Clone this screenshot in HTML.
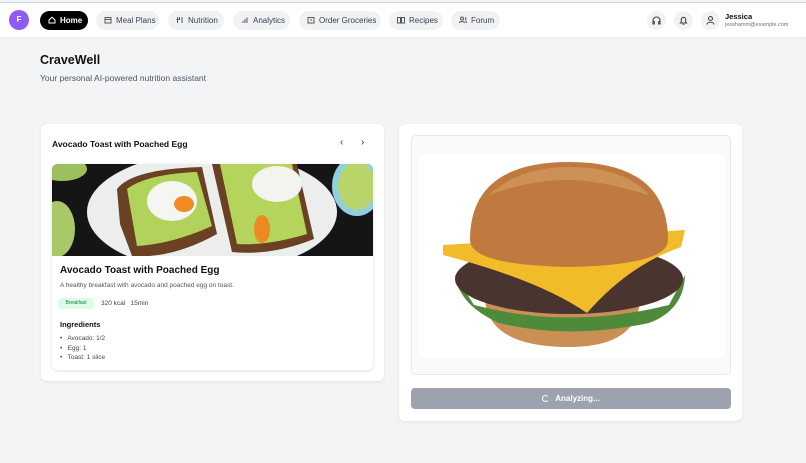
<!DOCTYPE html>
<html><head><meta charset="utf-8"><style>
*{box-sizing:border-box;margin:0;padding:0}
body{width:806px;height:463px;background:#f3f4f6;font-family:"Liberation Sans",sans-serif;position:relative;overflow:hidden;color:#111}
.abs{position:absolute}
.nav{left:0;top:2px;width:806px;height:35px;background:#fff;border-top:1px solid #d1d5db;box-shadow:0 1px 2px rgba(0,0,0,.06)}
.pill{position:absolute;top:8px;height:19px;border-radius:10px;background:#f1f2f4;font-size:8px;color:#374151;line-height:19px;padding-left:20px}
.pill svg{position:absolute;left:8px;top:5px}
.ib{position:absolute;top:8px;width:19px;height:19px;border-radius:50%;background:#f1f2f4}
.card{background:#fff;border-radius:6px;box-shadow:0 1px 3px rgba(0,0,0,.08)}
</style></head><body>
<div class="abs nav">
 <div class="abs" style="left:9px;top:7px;width:20px;height:20px;border-radius:50%;background:#8b5cf6;color:#fff;font-size:8px;font-weight:bold;text-align:center;line-height:20px">F</div>
 <div class="pill" style="left:40px;width:48px;background:#000;color:#fff;font-weight:bold"><svg width="8" height="8" viewBox="0 0 8 8" fill="none" stroke="#fff" stroke-width="1"><path d="M1 4L4 1.2 7 4V7H1Z"/></svg>Home</div>
 <div class="pill" style="left:96px;width:63px"><svg width="8" height="8" viewBox="0 0 8 8" fill="none" stroke="#555"><rect x="1" y="1.5" width="6" height="5.5"/><path d="M1 3.5H7"/></svg>Meal Plans</div>
 <div class="pill" style="left:168px;width:56px"><svg width="8" height="8" viewBox="0 0 8 8" fill="none" stroke="#555"><path d="M1.5 1V7M3.5 1V3.5H.5M6 1V7"/></svg>Nutrition</div>
 <div class="pill" style="left:233px;width:57px"><svg width="8" height="8" viewBox="0 0 8 8" fill="none" stroke="#555"><path d="M2 7V5M4 7V3M6 7V1.5"/></svg>Analytics</div>
 <div class="pill" style="left:299px;width:82px"><svg width="8" height="8" viewBox="0 0 8 8" fill="none" stroke="#555"><rect x="1" y="1.5" width="6" height="5.5"/><path d="M3 4H5"/></svg>Order Groceries</div>
 <div class="pill" style="left:389px;width:54px"><svg width="8" height="8" viewBox="0 0 8 8" fill="none" stroke="#555"><path d="M.5 1.5H3.5V7H.5ZM4.5 1.5H7.5V7H4.5Z"/></svg>Recipes</div>
 <div class="pill" style="left:451px;width:49px"><svg width="8" height="8" viewBox="0 0 8 8" fill="none" stroke="#555"><circle cx="3" cy="2.5" r="1.5"/><path d="M.5 7C.5 5 5.5 5 5.5 7M6 1.5A1.3 1.3 0 0 1 6 4M7.5 7C7.5 6 7 5.2 6.5 5"/></svg>Forum</div>
 <div class="ib" style="left:647px"><svg width="19" height="19" viewBox="0 0 19 19" fill="none" stroke="#444" stroke-width="1.1"><path d="M6 12V9.5A3.5 3.5 0 0 1 13 9.5V12M6 10.5H7.3V13H6ZM11.7 10.5H13V13H11.7Z"/></svg></div>
 <div class="ib" style="left:674px"><svg width="19" height="19" viewBox="0 0 19 19" fill="none" stroke="#444" stroke-width="1.1"><path d="M6.5 12H12.5L11.7 11V8.5A2.2 2.2 0 0 0 7.3 8.5V11ZM8.7 13.3H10.3"/></svg></div>
 <div class="ib" style="left:701px"><svg width="19" height="19" viewBox="0 0 19 19" fill="none" stroke="#444" stroke-width="1.1"><circle cx="9.5" cy="7.5" r="2"/><path d="M6 13.5C6 10.5 13 10.5 13 13.5"/></svg></div>
 <div class="abs" style="left:725px;top:9px;font-size:7.5px;font-weight:bold">Jessica</div>
 <div class="abs" style="left:725px;top:19px;font-size:5.5px;color:#6b7280">jesshamm@example.com</div>
</div>
<div class="abs" style="left:40px;top:53px;font-size:12.5px;font-weight:bold">CraveWell</div>
<div class="abs" style="left:40px;top:73px;font-size:8.5px;color:#4b5563">Your personal AI-powered nutrition assistant</div>

<div class="abs card" style="left:41px;top:124px;width:343px;height:257px">
 <div class="abs" style="left:11px;top:15px;font-size:8.5px;font-weight:bold">Avocado Toast with Poached Egg</div>
 <div class="abs" style="left:299px;top:13px;font-size:10px;color:#333">‹</div>
 <div class="abs" style="left:320px;top:13px;font-size:10px;color:#333">›</div>
 <div class="abs card" style="left:11px;top:40px;width:321px;height:206px;overflow:hidden;box-shadow:0 1px 4px rgba(0,0,0,.12)">
  <svg class="abs" style="left:0;top:0" width="321" height="92" viewBox="0 0 321 92">
   <rect width="321" height="92" fill="#151515"/>
   <ellipse cx="10" cy="5" rx="25" ry="12" fill="#9cc060"/>
   <ellipse cx="5" cy="65" rx="18" ry="28" fill="#a9c86a"/>
   <ellipse cx="160" cy="48" rx="125" ry="60" fill="#eceeee"/>
   <ellipse cx="305" cy="22" rx="25" ry="30" fill="#8fd0e0"/>
   <ellipse cx="305" cy="22" rx="19" ry="24" fill="#b9d46a"/>
   <path d="M65 25Q80 5 150 3L165 70Q120 95 80 92L68 60Z" fill="#6b4123"/>
   <path d="M75 25Q95 10 145 8L160 62Q120 80 85 82Z" fill="#b2d35b"/>
   <path d="M160 0H245L262 75Q220 92 180 88Z" fill="#6b4123"/>
   <path d="M168 0H240L255 70Q215 82 185 80Z" fill="#b5d45c"/>
   <ellipse cx="120" cy="37" rx="25" ry="20" fill="#f5f5f2"/>
   <ellipse cx="132" cy="40" rx="10" ry="8" fill="#f08a22"/>
   <ellipse cx="225" cy="20" rx="25" ry="18" fill="#f3f3f0"/>
   <ellipse cx="210" cy="65" rx="8" ry="14" fill="#eb8a20"/>
  </svg>
  <div class="abs" style="left:8px;top:101px;font-size:10px;font-weight:bold">Avocado Toast with Poached Egg</div>
  <div class="abs" style="left:8px;top:118px;font-size:6.5px;color:#555">A healthy breakfast with avocado and poached egg on toast.</div>
  <div class="abs" style="left:6px;top:134px;width:36px;height:11px;background:#dcfce7;border-radius:3px;font-size:5px;color:#15803d;text-align:center;line-height:11px">Breakfast</div>
  <div class="abs" style="left:49px;top:136px;font-size:6.5px;color:#444">320 kcal&nbsp;&nbsp;&nbsp;15min</div>
  <div class="abs" style="left:8px;top:156px;font-size:7.5px;font-weight:bold">Ingredients</div>
  <div class="abs" style="left:8px;top:170px;font-size:6.5px;color:#444;line-height:9.5px">•&nbsp;&nbsp; Avocado: 1/2<br>•&nbsp;&nbsp; Egg: 1<br>•&nbsp;&nbsp; Toast: 1 slice</div>
 </div>
</div>

<div class="abs card" style="left:399px;top:124px;width:343px;height:297px">
 <div class="abs" style="left:12px;top:11px;width:320px;height:240px;border:1px solid #e5e7eb;border-radius:5px;background:#f9fafb"></div>
 <svg class="abs" style="left:20px;top:31px" width="306" height="202" viewBox="0 0 306 202">
  <rect width="306" height="202" fill="#fff"/>
  <path d="M66 145Q70 192 150 192Q218 192 221 145Z" fill="#c98f55"/>
  <path d="M36 120Q40 150 80 168Q150 185 230 168Q265 155 266 120L250 150Q150 175 55 150Z" fill="#4f8a3a"/>
  <ellipse cx="150" cy="124" rx="114" ry="35" fill="#4a3430"/>
  <path d="M24 90L266 75L262 92Q210 110 168 158Q120 125 24 100Z" fill="#f2bb2a"/>
  <path d="M51 85Q51 7 150 7Q249 7 249 85Q249 110 150 112Q51 110 51 85Z" fill="#c07a40"/>
  <path d="M70 40Q100 12 150 12Q205 12 230 40Q180 25 150 25Q110 25 70 40Z" fill="#d39a60" opacity=".7"/>
 </svg>
 <div class="abs" style="left:12px;top:264px;width:320px;height:21px;border-radius:4px;background:#9ca3af;color:#fff;font-size:8px;font-weight:bold;text-align:center;line-height:21px"><span style="display:inline-block;width:7px;height:7px;border:1px solid #fff;border-right-color:transparent;border-radius:50%;vertical-align:-1px;margin-right:6px"></span>Analyzing...</div>
</div>
</body></html>
